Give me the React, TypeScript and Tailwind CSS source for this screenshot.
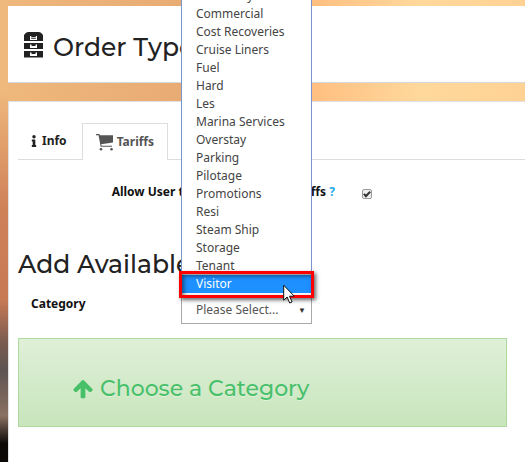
import type { ReactNode } from "react";
import { FaInfo } from "react-icons/fa";

const categories = [
  "Chandlery",
  "Commercial",
  "Cost Recoveries",
  "Cruise Liners",
  "Fuel",
  "Hard",
  "Les",
  "Marina Services",
  "Overstay",
  "Parking",
  "Pilotage",
  "Promotions",
  "Resi",
  "Steam Ship",
  "Storage",
  "Tenant",
  "Visitor",
];

function DrawersIcon() {
  return (
    <svg viewBox="0 0 19 26" className="h-[26px] w-[19px]" fill="#222" aria-hidden="true">
      <path
        fillRule="evenodd"
        d="M0 3Q2 0 4 0h11q2 0 4 3v6H0zM6 4v4h7V4h-1.200v1.200H7.200V4zM7.200 6.200h4.600v.8H7.200z"
      />
      <path fillRule="evenodd" d="M0 11h19v6H0zM6 12.500v3.500h7v-3.500h-1.500v1.500h-4v-1.500z" />
      <path fillRule="evenodd" d="M0 19h19v6.500H0zM6 20.500v3.500h7v-3.500h-1.500v1.500h-4v-1.500z" />
    </svg>
  );
}

function CartIcon() {
  return (
    <svg viewBox="0 0 18 17" className="h-[17px] w-[18px]" fill="#555" aria-hidden="true">
      <path d="M0 0h3.400l.5 1.300H17v7.200L5.200 10.200l.4 1.500H16v1H4.700L2.500 1.300H0z" />
      <circle cx="5" cy="15.200" r="1.300" />
      <circle cx="15.500" cy="15.200" r="1.300" />
    </svg>
  );
}

function ArrowUpIcon() {
  return (
    <svg viewBox="90 130 1612 1560" className="h-[20px] w-[20px]" fill="currentColor" aria-hidden="true">
      <path d="M1675 971q0 51-37 90l-75 75q-38 38-91 38-54 0-90-38l-294-293v704q0 52-37.500 84.500t-90.500 32.500h-128q-53 0-90.500-32.500t-37.500-84.500v-704l-294 293q-36 38-90 38t-90-38l-75-75q-38-38-38-90 0-53 38-91l651-651q35-37 90-37 54 0 91 37l651 651q37 39 37 91z" />
    </svg>
  );
}

function Pointer() {
  return (
    <svg
      viewBox="0 0 12 20"
      className="absolute bottom-[20px] right-[17px] z-20 h-[20px] w-[12px]"
      aria-hidden="true"
    >
      <path
        d="M.7 1.200v15l3.400-3.200 2.600 6 2.400-1-2.600-5.800h4.700z"
        fill="#fff"
        stroke="#111"
        strokeWidth="1"
      />
    </svg>
  );
}

function Heading({ children }: { children: ReactNode }) {
  return (
    <h2 className="whitespace-nowrap font-['Montserrat','Lato',sans-serif] text-[25px] font-medium leading-8 text-[#222]">
      {children}
    </h2>
  );
}

function CategoryPicker() {
  return (
    <div className="relative h-7 w-[131px]">
      <select
        id="category"
        className="block h-7 w-full appearance-none border border-[#a9a9a9] bg-white pl-[14px] text-[12px] text-[#555]"
      >
        <option>Please Select...</option>
      </select>
      <span className="pointer-events-none absolute right-[6px] top-[8px] text-[8px] leading-3 text-[#333]">
        ▼
      </span>
      <ul
        role="listbox"
        aria-label="Category options"
        className="absolute bottom-full left-0 z-10 w-full border border-[#7b96cc] bg-white pb-[2px] text-[12px] leading-[18px] text-[#444]"
      >
        {categories.map((name) => (
          <li
            key={name}
            role="option"
            aria-selected={name === "Visitor"}
            className="pl-[14px] aria-selected:bg-[#1e90ff] aria-selected:text-white"
          >
            {name}
          </li>
        ))}
      </ul>
      <div className="pointer-events-none absolute bottom-[26px] left-[-2px] right-[-2px] z-10 h-[27px] border-[3px] border-[#f00] shadow-[2px_2px_4px_rgba(0,0,0,0.6),inset_2px_2px_4px_rgba(0,0,0,0.5)]" />
      <Pointer />
    </div>
  );
}

export default function App() {
  return (
    <div className="h-screen overflow-hidden bg-[linear-gradient(90deg,#efb87c,#e8ab74_35%,#ffc081_60%,#ffd89c_80%,#ffd294)] font-['Noto_Sans','Open_Sans',sans-serif]">
      <div className="flex h-full flex-col bg-[linear-gradient(180deg,transparent_20%,#cf8158_45%,#c77954_65%,#7b5c50_74%,#5d5452_80%,#8a7061_90%,#0d0907_96%)] bg-[length:8px_100%] bg-no-repeat pl-2 pt-[6px]">
        <header className="flex h-[77px] shrink-0 items-center gap-[10px] border-b border-[#d5d8dc] bg-white pl-4 pt-[2px]">
          <DrawersIcon />
          <div className="pt-1">
            <Heading>Order Types</Heading>
          </div>
        </header>
        <main className="mt-[18px] grow border-l border-t border-[#e0e0e4] bg-white pl-[9px]">
          <nav className="flex h-[58px] items-end border-b border-[#ddd] text-[12px] font-bold">
            <a href="#info" className="flex h-9 items-center gap-[2px] pl-[10px] text-[#222]">
              <FaInfo size={12} />
              Info
            </a>
            <a
              href="#tariffs"
              className="-mb-px ml-[15px] flex h-[37px] items-center gap-[3px] border border-b-0 border-[#ddd] bg-white px-[13px] text-[#555]"
            >
              <CartIcon />
              Tariffs
            </a>
          </nav>
          <div className="flex h-[64px] items-center text-[12px] font-bold text-[#111]">
            <label htmlFor="allow" className="w-[317px] whitespace-nowrap text-right">
              Allow User to Select from the Tariffs <span className="text-[#1ca8e8]">?</span>
            </label>
            <input
              id="allow"
              type="checkbox"
              defaultChecked
              className="ml-[27px] mt-1 grid size-[10px] appearance-none place-items-center rounded-[2px] border border-[#999] bg-[#eee] before:h-[7px] before:w-1 before:-translate-y-px before:rotate-45 before:border-b-2 before:border-r-2 before:border-[#333]"
            />
          </div>
          <div className="mt-[24px]">
            <Heading>Add Available Tariffs</Heading>
          </div>
          <div className="mt-4 flex">
            <label htmlFor="category" className="w-[163px] pl-[13px] text-[12px] font-bold leading-4 text-[#111]">
              Category
            </label>
            <CategoryPicker />
          </div>
          <section className="mr-[18px] mt-[14px] flex h-[89px] items-center gap-[7px] border border-[#aedb9d] bg-linear-to-b from-[#dff0d8] to-[#c8e5bc] pl-[54px] pt-3 text-[#48c06a] [text-shadow:0_1px_0_rgba(255,255,255,0.4)]">
            <ArrowUpIcon />
            <h3 className="font-['Montserrat','Lato',sans-serif] text-[22px] font-medium leading-7">
              Choose a Category
            </h3>
          </section>
        </main>
      </div>
    </div>
  );
}
